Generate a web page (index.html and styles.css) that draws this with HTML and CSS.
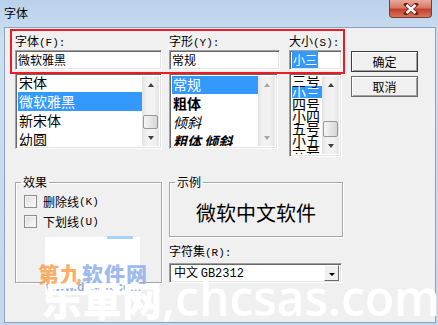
FILE: index.html
```html
<!DOCTYPE html>
<html lang="zh-CN">
<head>
    <meta charset="UTF-8">
    <title>字体</title>
    <link rel="stylesheet" href="styles.css">
</head>
<body>
<div class="window">
    <div class="titlebar">
        <span class="title">字体</span>
        <div class="close">
            <svg width="16" height="12" viewBox="0 0 16 12">
                <path d="M3 1.5 L13 10.5 M13 1.5 L3 10.5" stroke="#6a2218" stroke-width="4" stroke-linecap="square"/>
                <path d="M3.5 2 L12.5 10 M12.5 2 L3.5 10" stroke="#fff" stroke-width="2.4"/>
            </svg>
        </div>
    </div>
    <div class="client">
        <div class="top">
            <div class="col col-font">
                <div class="label">字体<span class="key">(F):</span></div>
                <div class="edit">微软雅黑</div>
                <div class="list list-font">
                    <div class="items">
                        <div class="item first">宋体</div>
                        <div class="item sel">微软雅黑</div>
                        <div class="item">新宋体</div>
                        <div class="item">幼圆</div>
                    </div>
                    <div class="scrollbar">
                        <div class="arrow up"></div>
                        <div class="track end"><div class="thumb"></div></div>
                        <div class="arrow down"></div>
                    </div>
                </div>
            </div>
            <div class="col col-style">
                <div class="label">字形<span class="key">(Y):</span></div>
                <div class="edit">常规</div>
                <div class="list list-style">
                    <div class="items">
                        <div class="item first sel">常规</div>
                        <div class="item bold">粗体</div>
                        <div class="item italic">倾斜</div>
                        <div class="item bold italic">粗体 倾斜</div>
                    </div>
                    <div class="scrollbar off">
                        <div class="arrow up"></div>
                        <div class="track"></div>
                        <div class="arrow down"></div>
                    </div>
                </div>
            </div>
            <div class="col col-size">
                <div class="label">大小<span class="key">(S):</span></div>
                <div class="edit"><span class="picked">小三</span></div>
                <div class="list list-size">
                    <div class="items">
                        <div class="item first">三号</div>
                        <div class="item sel">小三</div>
                        <div class="item">四号</div>
                        <div class="item">小四</div>
                        <div class="item">五号</div>
                        <div class="item">小五</div>
                        <div class="item">六号</div>
                    </div>
                    <div class="scrollbar">
                        <div class="arrow up"></div>
                        <div class="track"><div class="thumb size-thumb"></div></div>
                        <div class="arrow down"></div>
                    </div>
                </div>
            </div>
            <div class="buttons">
                <div class="button default">确定</div>
                <div class="button">取消</div>
            </div>
        </div>
        <div class="bottom">
            <fieldset class="group effects">
                <legend>效果</legend>
                <div class="check first-check"><span class="box"></span>删除线<span class="key">(K)</span></div>
                <div class="check"><span class="box"></span>下划线<span class="key">(U)</span></div>
            </fieldset>
            <div class="right">
                <fieldset class="group sample">
                    <legend>示例</legend>
                    <div class="sample-text">微软中文软件</div>
                </fieldset>
                <div class="label charset">字符集<span class="key">(R):</span></div>
                <div class="combo">
                    <span class="combo-text">中文 <span class="mono">GB2312</span></span>
                    <span class="drop"><span class="tri"></span></span>
                </div>
            </div>
        </div>
    </div>

    <div class="annotation"></div>

    <div class="wm-box"></div>
    <div class="wm-bar"></div>
    <div class="wm-logo"><span class="orange">第九</span><span class="blue">软件网</span></div>
    <div class="wm-url">www.d9soft.com</div>
    <div class="wm-big"><span class="cjk">乐軍网</span>,chcsas.com</div>
</div>
</body>
</html>
```

FILE: styles.css
```css
/* dialog */
* {
    box-sizing: border-box;
}

body {
    margin: 0;
    font-family: "Noto Sans CJK SC", "Liberation Sans", sans-serif;
    font-size: 12px;
    color: #000;
}

.window {
    position: relative;
    width: 438px;
    height: 325px;
    padding: 0 2px 2px 4px;
    display: flex;
    flex-direction: column;
    overflow: hidden;
    background: linear-gradient(to bottom, #b9d1ea, #cddff1 40px, #c4d7ec);
}

.titlebar {
    height: 27px;
    display: flex;
    justify-content: space-between;
    align-items: flex-start;
}

.title {
    line-height: 26px;
    font-size: 12px;
}

.close {
    width: 43px;
    height: 18px;
    margin-right: 4px;
    border: 1px solid #7e3a30;
    border-top: none;
    border-radius: 0 0 4px 4px;
    background: linear-gradient(to bottom, #e9a99c, #d47a66 45%, #c0402a 55%, #d8765c);
    display: flex;
    align-items: center;
    justify-content: center;
}

.client {
    flex: 1;
    background: #f0f0f0;
    border: 1px solid #8ba3c0;
}

.top {
    display: flex;
    align-items: flex-start;
    padding: 4px 0 0 10px;
}

.col {
    display: flex;
    flex-direction: column;
}

.col-font {
    width: 147px;
    margin-right: 7px;
}

.col-style {
    width: 111px;
    margin-right: 9px;
}

.col-size {
    width: 53px;
    margin-right: 9px;
}

.label {
    height: 18px;
    line-height: 18px;
    white-space: nowrap;
}

.key {
    font-family: "Liberation Mono", monospace;
    font-size: 11px;
}

.edit,
.list,
.combo {
    background: #fff;
    border: 1px solid;
    border-color: #a0a0a0 #fff #fff #a0a0a0;
    box-shadow: inset 1px 1px 0 #696969, inset -1px -1px 0 #e3e3e3;
}

.edit {
    height: 20px;
    padding: 0 2px;
    line-height: 18px;
    white-space: nowrap;
}

.picked {
    background: #3399ff;
    color: #fff;
    padding: 0 1px;
}

.list {
    margin-top: 3px;
    height: 76px;
    padding: 2px;
    display: flex;
    overflow: hidden;
}

.list-style {
    width: 109px;
}

.list-size {
    height: 84px;
}

.items {
    flex: 1;
    overflow: hidden;
}

.item {
    height: 19px;
    line-height: 18px;
    font-size: 14px;
    padding-left: 1px;
    white-space: nowrap;
}

.list-font .first {
    margin-top: -3px;
}

.list-style .first {
    margin-top: -1px;
}

.item.sel {
    background: #3399ff;
    color: #fff;
}

.bold {
    font-weight: bold;
}

.italic {
    font-style: italic;
}

.list-size .item {
    height: 12px;
    line-height: 12px;
    font-size: 14px;
    padding-left: 0;
}

.list-size .first {
    margin-top: -2px;
}

.scrollbar {
    width: 17px;
    display: flex;
    flex-direction: column;
    background: linear-gradient(to right, #e3e3e3, #f2f2f2 30%, #f2f2f2 70%, #e3e3e3);
}

.arrow {
    height: 17px;
    display: flex;
    align-items: center;
    justify-content: center;
}

.arrow::after {
    content: "";
    border-left: 3.5px solid transparent;
    border-right: 3.5px solid transparent;
}

.arrow.up::after {
    border-bottom: 4px solid #404040;
}

.arrow.down::after {
    border-top: 4px solid #404040;
}

.off .arrow.up::after {
    border-bottom-color: #a8a8a8;
}

.off .arrow.down::after {
    border-top-color: #a8a8a8;
}

.track {
    flex: 1;
    display: flex;
    flex-direction: column;
}

.track.end {
    justify-content: flex-end;
}

.thumb {
    height: 14px;
    margin: 0 1px;
    border: 1px solid #979797;
    border-radius: 2px;
    background: linear-gradient(to right, #f5f5f5, #e6e6e6 50%, #d6d6d6);
}

.size-thumb {
    margin-top: 28px;
    height: 16px;
}

.buttons {
    width: 67px;
    padding-top: 19px;
    display: flex;
    flex-direction: column;
    gap: 4px;
}

.button {
    height: 21px;
    line-height: 19px;
    text-align: center;
    font-size: 12px;
    background: #f0f0f0;
    border: 1px solid #6a6a6a;
    box-shadow: inset 1px 1px 0 #fff, inset -1px -1px 0 #a0a0a0;
}

.button.default {
    border-color: #3c3c3c;
}

.bottom {
    display: flex;
    align-items: flex-start;
    padding: 18px 0 0 10px;
}

.group {
    margin: 0;
    padding: 0 0 0 5px;
    border: 1px solid #a6a6a6;
    box-shadow: 1px 1px 0 #fff, inset 1px 1px 0 #fff;
}

.group legend {
    padding: 0 2px;
    line-height: 14px;
    font-size: 12px;
}

.effects {
    width: 147px;
    height: 108px;
    margin-right: 7px;
}

.check {
    height: 13px;
    display: flex;
    align-items: center;
    margin: 7px 0 0 3px;
    white-space: nowrap;
}

.check.first-check {
    margin-top: 6px;
}

.box {
    width: 13px;
    height: 13px;
    margin-right: 6px;
    border: 1px solid #8e8f8f;
    background: linear-gradient(135deg, #dcdcdc, #fbfbfb);
    box-shadow: inset 0 0 0 1px #f4f4f4;
}

.right {
    width: 174px;
    display: flex;
    flex-direction: column;
}

.sample {
    height: 62px;
    display: flex;
    align-items: center;
    justify-content: center;
}

.sample-text {
    font-size: 20px;
    line-height: 48px;
    text-align: center;
    padding-right: 5px;
}

.charset {
    margin-top: 7px;
    height: 14px;
    line-height: 14px;
}

.combo {
    margin-top: 5px;
    width: 173px;
    height: 20px;
    padding: 2px;
    display: flex;
    justify-content: space-between;
    align-items: center;
}

.combo-text {
    padding-left: 2px;
    line-height: 16px;
    white-space: nowrap;
}

.mono {
    font-family: "Liberation Mono", monospace;
    font-size: 12px;
}

.drop {
    width: 15px;
    height: 16px;
    background: #f0f0f0;
    border: 1px solid;
    border-color: #fff #696969 #696969 #fff;
    display: flex;
    align-items: center;
    justify-content: center;
}

.tri {
    border-left: 3px solid transparent;
    border-right: 3px solid transparent;
    border-top: 3px solid #000;
    margin-top: 2px;
}

/* red highlight drawn over the labels */
.annotation {
    position: absolute;
    left: 10px;
    top: 29px;
    width: 335px;
    height: 45px;
    border: 2px solid #ec1c24;
}

/* watermark */
.wm-box {
    position: absolute;
    left: 45px;
    top: 237px;
    width: 95px;
    height: 58px;
    background: #fff;
}

.wm-bar {
    position: absolute;
    left: 107px;
    top: 236px;
    width: 26px;
    height: 3px;
    background: #a9d2f7;
}

.wm-logo {
    position: absolute;
    left: 38px;
    top: 260px;
    font-size: 21px;
    font-weight: 900;
    letter-spacing: 1px;
    line-height: 26px;
    opacity: 0.85;
}

.orange {
    color: #f8a04f;
}

.blue {
    color: #8fb0ea;
}

.wm-url {
    position: absolute;
    left: 46px;
    top: 281px;
    font-family: "Liberation Sans", sans-serif;
    font-size: 12px;
    font-weight: bold;
    line-height: 13px;
    color: #93acdf;
}

.wm-big {
    position: absolute;
    left: 42px;
    top: 268px;
    font-family: "Open Sans", sans-serif;
    font-size: 48px;
    font-weight: 600;
    line-height: 60px;
    color: #fff;
    white-space: nowrap;
}

.wm-big .cjk {
    font-family: "Noto Sans CJK SC", sans-serif;
    font-weight: 900;
    font-size: 40px;
}
```
